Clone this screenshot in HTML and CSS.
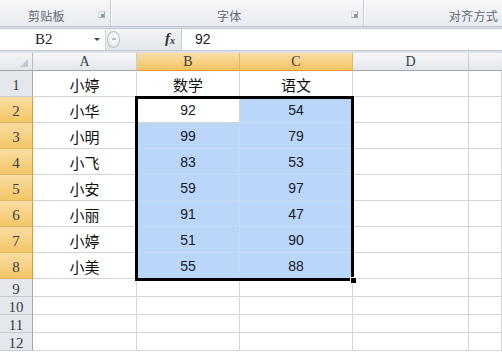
FILE: index.html
```html
<!DOCTYPE html>
<html lang="zh">
<head>
<meta charset="utf-8">
<link rel="stylesheet" href="styles.css">
</head>
<body>
<div class="app">
  <div class="ribbon">
    <div class="group g1"><span class="glabel">剪贴板</span><span class="launcher"></span></div>
    <div class="group g2"><span class="glabel">字体</span><span class="launcher"></span></div>
    <div class="group g3"><span class="glabel">对齐方式</span></div>
  </div>
  <div class="fbar">
    <div class="namebox"><span class="ref">B2</span><span class="arrow"></span></div>
    <div class="fbtns"><span class="knob"></span><span class="fx">f<sub>x</sub></span></div>
    <div class="fval">92</div>
  </div>
  <div class="sheet">
    <div class="grid">
      <div class="corner"><span class="tri"></span></div>
      <div class="ch">A</div><div class="ch sel">B</div><div class="ch sel">C</div><div class="ch">D</div><div class="ch last"></div>

      <div class="rh">1</div><div class="c">小婷</div><div class="c">数学</div><div class="c">语文</div><div class="c"></div><div class="c"></div>
      <div class="rh sel">2</div><div class="c">小华</div><div class="c num">92</div><div class="c num s">54</div><div class="c"></div><div class="c"></div>
      <div class="rh sel">3</div><div class="c">小明</div><div class="c num s">99</div><div class="c num s">79</div><div class="c"></div><div class="c"></div>
      <div class="rh sel">4</div><div class="c">小飞</div><div class="c num s">83</div><div class="c num s">53</div><div class="c"></div><div class="c"></div>
      <div class="rh sel">5</div><div class="c">小安</div><div class="c num s">59</div><div class="c num s">97</div><div class="c"></div><div class="c"></div>
      <div class="rh sel">6</div><div class="c">小丽</div><div class="c num s">91</div><div class="c num s">47</div><div class="c"></div><div class="c"></div>
      <div class="rh sel">7</div><div class="c">小婷</div><div class="c num s">51</div><div class="c num s">90</div><div class="c"></div><div class="c"></div>
      <div class="rh sel">8</div><div class="c">小美</div><div class="c num s">55</div><div class="c num s">88</div><div class="c"></div><div class="c"></div>
      <div class="rh">9</div><div class="c"></div><div class="c"></div><div class="c"></div><div class="c"></div><div class="c"></div>
      <div class="rh">10</div><div class="c"></div><div class="c"></div><div class="c"></div><div class="c"></div><div class="c"></div>
      <div class="rh">11</div><div class="c"></div><div class="c"></div><div class="c"></div><div class="c"></div><div class="c"></div>
      <div class="rh">12</div><div class="c"></div><div class="c"></div><div class="c"></div><div class="c"></div><div class="c"></div>
    </div>
    <div class="selbox"><span class="handle"></span></div>
  </div>
</div>
</body>
</html>
```
FILE: styles.css
```css
* { box-sizing: border-box; }
html, body { margin: 0; padding: 0; }
body {
  width: 502px; height: 352px; overflow: hidden; background: #fff;
  font-family: "Noto Sans CJK SC", "Noto Sans", sans-serif;
}
.app { width: 502px; height: 352px; background: #dde2e8; }

/* ribbon */
.ribbon {
  display: flex; height: 27px;
  background: linear-gradient(#f6f7f9, #e9ecf0);
  border-bottom: 1px solid #b8c1cc;
}
.group {
  position: relative; display: flex; align-items: center;
  height: 26px; border-right: 1px solid #c6cdd6; box-shadow: 1px 0 0 #fafbfc;
  padding-top: 4px;
}
.g1 { width: 111px; padding-left: 28px; }
.g2 { width: 253px; padding-left: 106px; }
.g3 { flex: 1; border-right: none; justify-content: flex-end; padding-right: 4px; }
.glabel { font-size: 12px; color: #636a73; letter-spacing: 0.3px; }
.launcher {
  position: absolute; right: 5px; top: 11px; width: 7px; height: 7px;
  border: 1px solid #a4acb6; border-top-color: #d4d9df; border-left-color: #d4d9df;
  background: #eef1f4;
}
.launcher::after {
  content: ""; position: absolute; right: 0; bottom: 0; width: 3px; height: 3px;
  background: #8d96a1;
}

/* formula bar */
.fbar {
  display: flex; height: 23px; margin-top: 1px; background: #fff;
  border-top: 1px solid #c2c9d2; border-bottom: 1px solid #c2c9d2;
}
.namebox {
  width: 106px; display: flex; align-items: center; position: relative;
  border-right: 1px solid #d3d8de;
}
.ref { margin-left: 35px; font-family: "Liberation Serif", serif; font-size: 15px; color: #222; }
.arrow {
  position: absolute; left: 94px; top: 9px; width: 0; height: 0;
  border-left: 3px solid transparent; border-right: 3px solid transparent; border-top: 3px solid #444;
}
.fbtns {
  width: 76px; background: linear-gradient(#f2f4f7, #e3e7ec);
  position: relative; border-right: 1px solid #c9cfd7;
}
.knob {
  position: absolute; left: 1px; top: 2px; width: 13px; height: 17px;
  border-radius: 50%; border: 1px solid #b9c0c9;
  background: radial-gradient(circle at 60% 40%, #ffffff, #dfe3e8);
}
.knob::after {
  content: ""; position: absolute; left: 4px; top: 6px; width: 4px; height: 2px; background: #b6bcc4;
}
.fx {
  position: absolute; left: 59px; top: 1px; font-family: "Liberation Serif", serif;
  font-style: italic; font-weight: bold; font-size: 15px; color: #333;
}
.fx sub { font-size: 10px; vertical-align: -1px; }
.fval { padding-left: 13px; font-size: 14px; line-height: 21px; font-family: "Liberation Sans", sans-serif; color: #222; }

/* sheet */
.sheet { position: relative; margin-top: 2px; background: #fff; height: 299px; }
.grid {
  display: grid;
  grid-template-columns: 33px 104px 103px 113px 116px 33px;
  grid-template-rows: 18px repeat(8, 26px) repeat(4, 18px);
}
.corner {
  position: relative;
  background: linear-gradient(#f3f5f8, #e3e7ec);
  border-right: 1px solid #b5bcc5; border-bottom: 1px solid #9ea7b2;
}
.tri {
  position: absolute; right: 4px; bottom: 3px; width: 0; height: 0;
  border-left: 8px solid transparent; border-bottom: 8px solid #c3c9d0;
}
.ch, .rh {
  display: flex; align-items: center; justify-content: center;
  font-family: "Liberation Serif", serif; color: #3a3d42;
}
.ch {
  font-size: 14px;
  background: linear-gradient(#f6f7f9, #e3e7ec);
  border-right: 1px solid #c5ccd4; border-bottom: 1px solid #9ea7b2;
}
.ch.last { border-right: none; }
.ch.sel {
  background: linear-gradient(#f9dea6, #f2c461);
  border-right: 1px solid #e2b36a; border-bottom: 1px solid #f29436;
}
.rh {
  font-size: 15px;
  background: #e4e8ed; padding-top: 3px;
  border-right: 1px solid #9ea7b2; border-bottom: 1px solid #c5ccd4;
}
.rh.sel {
  background: linear-gradient(#f9dda3, #f3c666);
  border-right: 1px solid #f29436; border-bottom: 1px solid #e2b36a;
}
.c {
  display: flex; align-items: center; justify-content: center;
  border-right: 1px solid #d5d5d5; border-bottom: 1px solid #d5d5d5;
  font-size: 15px; color: #111; padding-top: 1px;
}
.c.num { font-family: "Liberation Sans", sans-serif; font-size: 14px; color: #1a1a2a; }
.c.s { background: #bad6f8; border-color: #c6dcf6; }

.selbox {
  position: absolute; left: 135px; top: 43px; width: 219px; height: 185px;
  border: 3px solid #000;
}
.handle {
  position: absolute; right: -6px; bottom: -6px; width: 7px; height: 7px;
  background: #000; border: 1px solid #fff;
}
```
